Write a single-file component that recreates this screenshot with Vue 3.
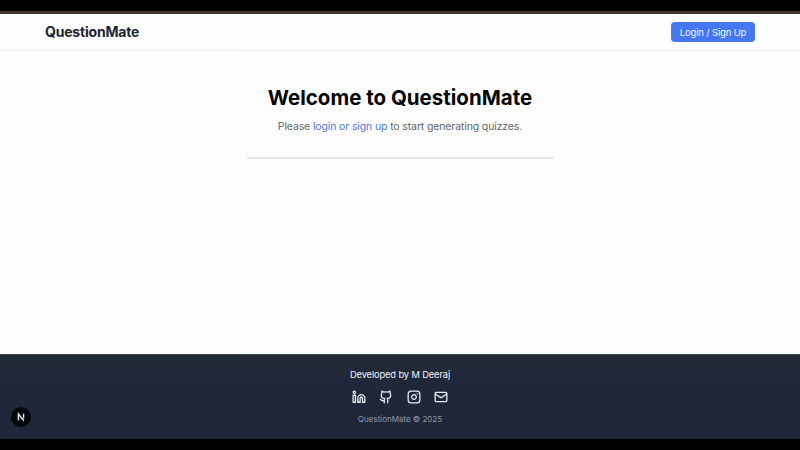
<script setup>
const icons = [
  { name: 'LinkedIn', d: ['M16 8a6 6 0 0 1 6 6v7h-4v-7a2 2 0 0 0-4 0v7h-4v-7a6 6 0 0 1 6-6z', 'M2 9h4v12H2z', 'M4 2a2 2 0 1 1 0 4 2 2 0 0 1 0-4z'] },
  { name: 'GitHub', d: ['M15 22v-4a4.8 4.8 0 0 0-1-3.5c3 0 6-2 6-5.5.08-1.25-.27-2.48-1-3.5.28-1.15.28-2.35 0-3.5 0 0-1 0-3 1.5-2.64-.5-5.36-.5-8 0C6 2 5 2 5 2c-.3 1.15-.3 2.35 0 3.5A5.4 5.4 0 0 0 4 9c0 3.5 3 5.5 6 5.5-.39.49-.68 1.05-.85 1.65S8.93 17.38 9 18v4', 'M9 18c-4.51 2-5-2-7-2'] },
  { name: 'Instagram', d: ['M7 2h10a5 5 0 0 1 5 5v10a5 5 0 0 1-5 5H7a5 5 0 0 1-5-5V7a5 5 0 0 1 5-5z', 'M16 11.37A4 4 0 1 1 12.63 8 4 4 0 0 1 16 11.37z', 'M17.5 6.5h.01'] },
  { name: 'Email', d: ['M4 4h16a2 2 0 0 1 2 2v12a2 2 0 0 1-2 2H4a2 2 0 0 1-2-2V6a2 2 0 0 1 2-2z', 'm22 7-8.97 5.7a1.94 1.94 0 0 1-2.06 0L2 7'] },
]
</script>

<template>
  <div class="screen">
    <header class="header">
      <div class="brand">QuestionMate</div>
      <button class="login">Login / Sign Up</button>
    </header>
    <main class="main">
      <section class="card">
        <h1>Welcome to QuestionMate</h1>
        <p>Please <a>login or sign up</a> to start generating quizzes.</p>
      </section>
    </main>
    <footer class="footer">
      <div class="credit">Developed by M Deeraj</div>
      <nav class="icons">
        <a v-for="icon in icons" :key="icon.name" :aria-label="icon.name">
          <svg viewBox="0 0 24 24"><path v-for="d in icon.d" :key="d" :d="d" /></svg>
        </a>
      </nav>
      <div class="copy">QuestionMate © 2025</div>
      <div class="badge">
        <svg viewBox="0 0 20 20"><path d="M7.4 13.2V7l5.4 6.8M12.6 6.8v4.8" /></svg>
      </div>
    </footer>
  </div>
</template>

<style>
body { background: #000; }
</style>

<style scoped>
.screen {
  box-sizing: border-box;
  width: 800px;
  height: 450px;
  display: flex;
  flex-direction: column;
  padding: 11px 0;
  background: #000;
  font-family: Inter, "Liberation Sans", sans-serif;
  overflow: hidden;
}
.header {
  box-sizing: border-box;
  height: 40px;
  flex: none;
  display: flex;
  align-items: center;
  justify-content: space-between;
  padding: 0 45px;
  border-top: 3px solid #49342a;
  border-bottom: 1px solid #eceeef;
  background: #fdfefe;
}
.brand {
  font-size: 14px;
  line-height: 20px;
  font-weight: 700;
  letter-spacing: -0.19px;
  color: #20252e;
}
.login {
  box-sizing: border-box;
  width: 84px;
  height: 20px;
  padding: 1px 0 0;
  border: 0;
  border-radius: 4px;
  background: #4677f3;
  color: #f4f7ff;
  font: 400 9.5px/19px Inter, sans-serif;
  letter-spacing: -0.17px;
  white-space: nowrap;
}
.main {
  flex: 1;
  display: flex;
  justify-content: center;
  align-items: flex-start;
  padding-top: 17px;
  background: linear-gradient(90deg, #fefefe 240px, #fcfefd 240px);
}
.card {
  box-sizing: border-box;
  width: 307px;
  height: 89px;
  padding-top: 16px;
  border-radius: 1px;
  text-align: center;
  background: #fdfdfd;
  box-shadow: 0 2px 0 #e6e6e9;
}
h1 {
  margin: 0 0 8px;
  font-size: 20.5px;
  line-height: 28px;
  font-weight: 700;
  color: #050505;
  white-space: nowrap;
}
p {
  margin: 0;
  font-size: 10.5px;
  line-height: 14px;
  letter-spacing: -0.13px;
  color: #626568;
  white-space: nowrap;
}
p a { color: #517bd5; }
.footer {
  position: relative;
  box-sizing: border-box;
  height: 85px;
  flex: none;
  display: flex;
  flex-direction: column;
  align-items: center;
  padding-top: 13px;
  border-top: 1px solid #3b484b;
  background: linear-gradient(#222c35, #20273a 35%, #20263a);
}
.credit {
  font-size: 9.3px;
  line-height: 14px;
  letter-spacing: -0.12px;
  color: #f2f4f6;
}
.icons {
  display: flex;
  gap: 13.4px;
  margin: 8px 0 9px;
}
.icons a { display: flex; }
.icons svg {
  width: 14px;
  height: 14px;
  fill: none;
  stroke: #e9ecf1;
  stroke-width: 2.2;
  stroke-linecap: round;
  stroke-linejoin: round;
}
.copy {
  font-size: 8.1px;
  line-height: 12px;
  letter-spacing: -0.05px;
  color: #9097a3;
}
.badge {
  position: absolute;
  left: 11px;
  top: 52px;
  width: 20px;
  height: 20px;
  border-radius: 50%;
  background: #05070b;
}
.badge svg {
  display: block;
  width: 20px;
  height: 20px;
  fill: none;
  stroke: #e5e7eb;
  stroke-width: 1.4;
}
</style>
